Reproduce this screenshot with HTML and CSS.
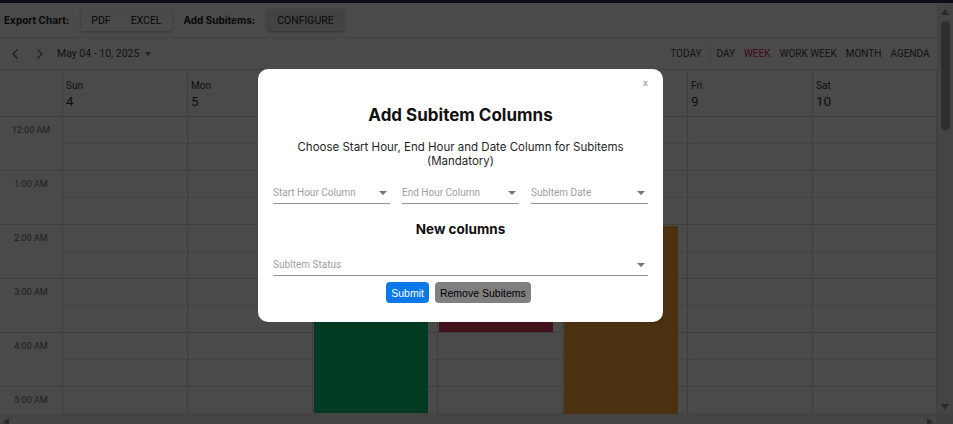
FILE: index.html
```html
<!DOCTYPE html>
<html lang="en">
<head>
    <meta charset="UTF-8">
    <meta name="viewport" content="width=device-width, initial-scale=1.0">
    <title>Subitems schedule</title>
    <link rel="stylesheet" href="styles.css">
</head>
<body>
    <div class="topline"></div>
    <div class="frame">
        <div class="viewport">
            <div class="app-toolbar">
                <span class="toolbar-label">Export Chart:</span>
                <div class="btn-group">
                    <button class="flat-btn">PDF</button>
                    <button class="flat-btn">EXCEL</button>
                </div>
                <span class="toolbar-label">Add Subitems:</span>
                <button class="flat-btn configure">CONFIGURE</button>
            </div>

            <div class="schedule">
                <div class="sch-toolbar">
                    <div class="nav">
                        <span class="nav-btn">
                            <svg width="8" height="10" viewBox="0 0 8 10"><path d="M6.5 0.5 L2 5 L6.5 9.5" fill="none" stroke="#6e6e6e" stroke-width="1.4"/></svg>
                        </span>
                        <span class="nav-btn">
                            <svg width="8" height="10" viewBox="0 0 8 10"><path d="M1.5 0.5 L6 5 L1.5 9.5" fill="none" stroke="#6e6e6e" stroke-width="1.4"/></svg>
                        </span>
                        <span class="date-range">May 04 - 10, 2025</span>
                        <span class="date-caret"></span>
                    </div>
                    <div class="views">
                        <span class="view">TODAY</span>
                        <span class="view-sep"></span>
                        <span class="view">DAY</span>
                        <span class="view active">WEEK</span>
                        <span class="view">WORK WEEK</span>
                        <span class="view">MONTH</span>
                        <span class="view">AGENDA</span>
                    </div>
                </div>

                <div class="sch-header">
                    <div class="corner-cell"></div>
                    <div class="day-head"><span class="day-name">Sun</span><span class="day-num">4</span></div>
                    <div class="day-head"><span class="day-name">Mon</span><span class="day-num">5</span></div>
                    <div class="day-head"><span class="day-name">Tue</span><span class="day-num">6</span></div>
                    <div class="day-head"><span class="day-name">Wed</span><span class="day-num">7</span></div>
                    <div class="day-head"><span class="day-name">Thu</span><span class="day-num">8</span></div>
                    <div class="day-head"><span class="day-name">Fri</span><span class="day-num">9</span></div>
                    <div class="day-head"><span class="day-name">Sat</span><span class="day-num">10</span></div>
                </div>

                <div class="sch-body" id="sch-body"></div>
            </div>
        </div>

        <div class="vscroll">
            <span class="arrow-up"></span>
            <span class="thumb"></span>
            <span class="arrow-down"></span>
        </div>
        <div class="hscroll">
            <span class="arrow-left"></span>
            <span class="arrow-right"></span>
        </div>
        <div class="scroll-corner"></div>
    </div>

    <div class="overlay">
        <div class="modal">
            <span class="modal-close">x</span>
            <h2>Add Subitem Columns</h2>
            <p class="modal-sub">Choose Start Hour, End Hour and Date Column for Subitems<br>(Mandatory)</p>
            <div class="dropdown-row">
                <div class="dropdown"><span>Start Hour Column</span><span class="dd-caret"></span></div>
                <div class="dropdown"><span>End Hour Column</span><span class="dd-caret"></span></div>
                <div class="dropdown"><span>SubItem Date</span><span class="dd-caret"></span></div>
            </div>
            <h3>New columns</h3>
            <div class="dropdown status"><span>SubItem Status</span><span class="dd-caret"></span></div>
            <div class="actions">
                <button class="btn-submit">Submit</button>
                <button class="btn-remove">Remove Subitems</button>
            </div>
        </div>
    </div>

    <script>
        const body = document.getElementById("sch-body");
        const hourHeight = 54;
        const hoursShown = 6;

        // day index 0 = Sunday
        const events = [
            { day: 2, start: 2, end: 5.5, cls: "ev-done" },
            { day: 3, start: 2, end: 4, cls: "ev-stuck" },
            { day: 4, start: 2, end: 7, cls: "ev-working" }
        ];

        function hourLabel(h) {
            const hh = h % 12 === 0 ? 12 : h % 12;
            return hh + ":00 " + (h < 12 ? "AM" : "PM");
        }

        const timeCol = document.createElement("div");
        timeCol.className = "time-col";
        for (let h = 0; h < hoursShown; h++) {
            const cell = document.createElement("div");
            cell.className = "time-cell";
            cell.textContent = hourLabel(h);
            timeCol.appendChild(cell);
        }
        body.appendChild(timeCol);

        for (let d = 0; d < 7; d++) {
            const col = document.createElement("div");
            col.className = "day-col";
            for (let s = 0; s < hoursShown * 2; s++) {
                const slot = document.createElement("div");
                slot.className = "slot";
                col.appendChild(slot);
            }
            events.filter(e => e.day === d).forEach(e => {
                const ev = document.createElement("div");
                const top = e.start * hourHeight + 1;
                ev.className = "event " + e.cls;
                ev.style.top = top + "px";
                ev.style.height = (e.end * hourHeight - top - 1) + "px";
                col.appendChild(ev);
            });
            body.appendChild(col);
        }
    </script>
</body>
</html>
```

FILE: styles.css
```css
* {
    box-sizing: border-box;
}

html, body {
    margin: 0;
    height: 424px;
    overflow: hidden;
}

body {
    font-family: Roboto, Arial, sans-serif;
    background-color: #fff;
    color: #333;
}

.topline {
    height: 3px;
    background-color: #292f4c;
}

.frame {
    display: grid;
    grid-template-columns: 937px 16px;
    grid-template-rows: 411px 15px;
}

.viewport {
    overflow: hidden;
}

/* app toolbar */
.app-toolbar {
    height: 35px;
    display: flex;
    align-items: center;
    gap: 12px;
    padding-left: 4px;
    border-bottom: 1px solid #e0e0e0;
}

.toolbar-label {
    font-family: Inter, sans-serif;
    font-weight: 700;
    font-size: 10px;
    color: #222;
}

.btn-group {
    display: flex;
    box-shadow: 0 1px 3px rgba(0, 0, 0, 0.35);
    border-radius: 2px;
}

.flat-btn {
    height: 22px;
    padding: 0 10px;
    border: none;
    background: #fff;
    font-family: Roboto, sans-serif;
    font-size: 10.5px;
    color: #222;
}

.flat-btn.configure {
    background: #e6e6e6;
    border-radius: 2px;
    box-shadow: 0 1px 3px rgba(0, 0, 0, 0.35);
}

/* schedule toolbar */
.sch-toolbar {
    height: 32px;
    display: flex;
    align-items: center;
    justify-content: space-between;
    padding: 0 3px 0 2px;
    border-bottom: 1px solid #e0e0e0;
}

.nav {
    display: flex;
    align-items: center;
}

.nav-btn {
    width: 25px;
    display: flex;
    justify-content: center;
}

.date-range {
    margin-left: 5px;
    font-size: 10.5px;
    color: #444;
}

.date-caret {
    margin-left: 6px;
    border-left: 3.5px solid transparent;
    border-right: 3.5px solid transparent;
    border-top: 4px solid #6e6e6e;
}

.views {
    display: flex;
    align-items: center;
}

.view {
    padding: 0 4.5px;
    font-size: 10px;
    color: #444;
}

.view.active {
    color: #e3165b;
}

.view-sep {
    width: 1px;
    height: 20px;
    background: #e0e0e0;
    margin: 0 1px 0 4px;
}

/* header & grid */
.sch-header,
.sch-body {
    display: grid;
    grid-template-columns: 62px repeat(7, 125px);
}

.sch-header {
    height: 47px;
    border-bottom: 1px solid #d6d6d6;
}

.day-head {
    display: flex;
    flex-direction: column;
    padding: 9px 0 0 3px;
    border-left: 1px solid #d6d6d6;
    color: #333;
}

.day-head:last-child,
.day-col:last-child {
    border-right: 1px solid #d6d6d6;
}

.day-name {
    font-size: 10px;
    line-height: 14px;
}

.day-num {
    font-size: 13.5px;
    line-height: 16px;
}

.time-cell {
    height: 54px;
    border-bottom: 1px solid #d6d6d6;
    text-align: center;
    font-size: 9px;
    line-height: 26px;
    color: #6b6b6b;
}

.day-col {
    position: relative;
    border-left: 1px solid #d6d6d6;
}

.slot {
    height: 27px;
    border-bottom: 1px dotted #d6d6d6;
}

    .slot:nth-child(even) {
        border-bottom-style: solid;
    }

.event {
    position: absolute;
    left: 1px;
    width: 114px;
}

.ev-done {
    background: #00c875;
}

.ev-stuck {
    background: #e2445c;
}

.ev-working {
    background: #fdab3d;
}

/* scrollbars */
.vscroll {
    grid-row: 1;
    grid-column: 2;
    display: flex;
    flex-direction: column;
    align-items: center;
    padding: 6px 0 4px;
    background: #e9e9e9;
}

.arrow-up {
    border-left: 4px solid transparent;
    border-right: 4px solid transparent;
    border-bottom: 6px solid #8e8e8e;
}

.thumb {
    width: 9px;
    height: 109px;
    margin-top: 6px;
    border-radius: 5px;
    background: #a0a0a0;
}

.arrow-down {
    margin-top: auto;
    border-left: 4px solid transparent;
    border-right: 4px solid transparent;
    border-top: 6px solid #8e8e8e;
}

.hscroll {
    grid-row: 2;
    grid-column: 1;
    display: flex;
    align-items: center;
    justify-content: space-between;
    padding: 0 4px 0 3px;
    background: #e9e9e9;
}

.arrow-left {
    border-top: 4px solid transparent;
    border-bottom: 4px solid transparent;
    border-right: 6px solid #8e8e8e;
}

.arrow-right {
    border-top: 4px solid transparent;
    border-bottom: 4px solid transparent;
    border-left: 6px solid #8e8e8e;
}

.scroll-corner {
    grid-row: 2;
    grid-column: 2;
    background: #dcdcdc;
}

/* modal */
.overlay {
    position: fixed;
    inset: 0;
    background: rgba(0, 0, 0, 0.71);
}

.modal {
    position: absolute;
    top: 69px;
    left: 258px;
    width: 405px;
    padding: 35px 15px 19px;
    background: #fff;
    border-radius: 10px;
    text-align: center;
    font-family: Inter, sans-serif;
    color: #111;
}

.modal-close {
    position: absolute;
    top: 8px;
    right: 15px;
    font-size: 9px;
    line-height: 11px;
    color: #8a8a8a;
}

.modal h2 {
    margin: 0;
    font-size: 17px;
    line-height: 22px;
    font-weight: 700;
}

.modal-sub {
    margin: 14px 0 0;
    font-size: 11.5px;
    line-height: 14px;
    color: #1f1f1f;
}

.dropdown-row {
    display: grid;
    grid-template-columns: repeat(3, 1fr);
    gap: 12px;
    margin-top: 12px;
}

.dropdown {
    display: flex;
    align-items: center;
    justify-content: space-between;
    padding: 6px 3px 3px 0;
    border-bottom: 1px solid #949494;
    text-align: left;
    font-family: Roboto, sans-serif;
    font-size: 10px;
    line-height: 14px;
    color: #9e9e9e;
}

.dd-caret {
    border-left: 4px solid transparent;
    border-right: 4px solid transparent;
    border-top: 4px solid #757575;
}

.modal h3 {
    margin: 16px 0 0;
    font-size: 13.5px;
    line-height: 18px;
    font-weight: 700;
}

.dropdown.status {
    margin-top: 15px;
    padding: 5px 3px 3px 0;
}

.actions {
    display: flex;
    justify-content: center;
    gap: 6px;
    margin-top: 6px;
    padding-right: 4px;
}

.actions button {
    height: 21px;
    padding: 0 5px;
    border: none;
    border-radius: 4px;
    font-family: "Liberation Sans", Arial, sans-serif;
    font-size: 10.5px;
}

.btn-submit {
    background: #0a78e6;
    color: #fff;
}

.btn-remove {
    background: #808080;
    color: #000;
}
```
